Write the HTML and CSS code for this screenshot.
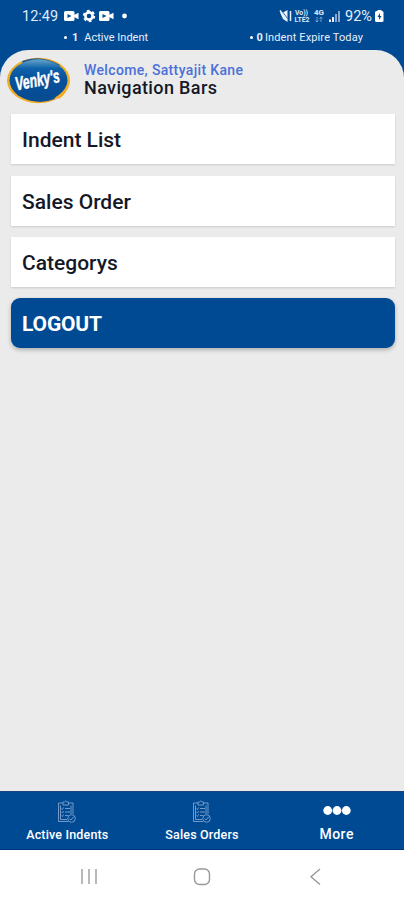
FILE: index.html
```html
<!DOCTYPE html>
<html lang="en">
<head>
<meta charset="utf-8">
<title>Navigation Bars</title>
<link rel="stylesheet" href="styles.css">
</head>
<body>
<div class="phone">
  <header class="top">
    <div class="status">
      <span class="clock">12:49</span>
      <svg class="status-left" width="66" height="14" viewBox="0 0 66 14">
        <g fill="#fff"><rect x="0" y="2" width="10.500" height="10" rx="1.500"/><path d="M10 6l4.500-2.200v6.400L10 8z"/>
        <rect x="35" y="2" width="10.500" height="10" rx="1.500"/><path d="M45 6l4.500-2.200v6.400L45 8z"/>
        <circle cx="60.500" cy="7" r="2.400"/></g>
        <path d="M3.500 5L7.500 7l-4 2zM38.500 5L42.500 7l-4 2z" fill="#004a94"/>
        <circle cx="25" cy="7" r="3.600" fill="none" stroke="#fff" stroke-width="2.600"/>
        <circle cx="25" cy="7" r="5.200" fill="none" stroke="#fff" stroke-width="2" stroke-dasharray="2.700 2.745"/>
      </svg>
      <svg class="status-right" width="61" height="16" viewBox="0 0 61 16">
        <path d="M0 4.500h3l4.500-2.500v12L3 11z" fill="#e7effa"/>
        <path d="M1.500 2.500l6 8" stroke="#004a94" stroke-width=".8"/><path d="M0 2.500l7 10M10.500 3v10" stroke="#e7effa" stroke-width="1.500"/>
        <g class="tiny"><text x="15" y="7" textLength="13" lengthAdjust="spacingAndGlyphs">Vo))</text><text x="14.500" y="14" textLength="15" lengthAdjust="spacingAndGlyphs">LTE2</text><text x="34" y="7" textLength="10" lengthAdjust="spacingAndGlyphs">4G</text></g>
        <path d="M37 9v5m-1.500-1.500L37 14l1.500-1.500M41 14V9m-1.500 1.500L41 9l1.500 1.500" fill="none" stroke="#8fb0d8" stroke-width=".8"/>
        <path d="M49 11.500h2V14h-2zM52 9h2v5h-2z" fill="#e7effa"/><path d="M55 6h2v8h-2zM58 3h2v11h-2z" fill="#87a9d2"/>
      </svg>
      <span class="percent">92%</span>
      <svg class="battery" width="9" height="13" viewBox="0 0 9 13"><rect x="2.500" width="4" height="2" fill="#fff"/><rect y="1" width="8.500" height="11" rx="1.500" fill="#fff"/><path d="M5 3L2.500 7H4v3l2.500-4H5z" fill="#004a94"/></svg>
    </div>
    <div class="counts">
      <span class="active-count"><i class="dot"></i><b>1</b><span>Active Indent</span></span>
      <span class="expire-count"><i class="dot"></i><b>0</b><span>Indent Expire Today</span></span>
    </div>
  </header>

  <main class="panel">
    <div class="profile">
      <svg class="logo" width="64" height="48" viewBox="0 0 64 48">
        <defs><linearGradient id="sky" x1="0" y1="0" x2="0" y2="1"><stop offset="0" stop-color="#68a5c8"/><stop offset=".22" stop-color="#0d61aa"/><stop offset=".5" stop-color="#07509b"/><stop offset="1" stop-color="#064b91"/></linearGradient></defs>
        <ellipse cx="31.500" cy="24.500" rx="31.500" ry="22.800" fill="#f1ac25"/>
        <path d="M15 5Q34-2 53 9l-3 3Q32 1 16 8zM9 37q18 14 39 6l-3-4q-16 6-32-1z" fill="#24568a"/>
        <ellipse cx="31.500" cy="24.300" rx="29" ry="21" fill="url(#sky)"/>
        <path d="M49 41q9-6 12-14-1 11-9 16z" fill="#f1ac25"/>
        <text class="wordmark" x="9.500" y="34.500" textLength="45" lengthAdjust="spacingAndGlyphs" transform="rotate(-11 9.500 34.500)">Venky's</text>
      </svg>
      <div class="heading"><p class="welcome">Welcome, Sattyajit Kane</p><h1>Navigation Bars</h1></div>
    </div>
    <nav class="menu">
      <a class="card indent">Indent List</a>
      <a class="card sales">Sales Order</a>
      <a class="card category">Categorys</a>
      <a class="card logout">LOGOUT</a>
    </nav>
  </main>

  <nav class="tabs">
    <a class="tab">
      <svg width="20" height="24" viewBox="0 0 20 24"><g fill="none" stroke="#7199c9" stroke-width="1"><path d="M6 3H1.500v18.500H11M11.500 3H16v11M6 4V2h1.500Q8.800-.5 10 2h1.500v3H6zM3.500 5.500v14H10M14 5.500V14"/><path d="M4.500 8.500l1 1 1-2M8 8.500h5M4.500 12l1 1 1-2M8 12h5M4.500 15.500l1 1 1-2M8 15.500h3"/><circle cx="14.500" cy="18.500" r="3.800"/><path d="M12.500 18.500l1.500 1.500 3-3.500"/></g></svg>
      <span class="label-active">Active Indents</span>
    </a>
    <a class="tab">
      <svg width="20" height="24" viewBox="0 0 20 24"><g fill="none" stroke="#7199c9" stroke-width="1"><path d="M6 3H1.500v18.500H11M11.500 3H16v11M6 4V2h1.500Q8.800-.5 10 2h1.500v3H6zM3.500 5.500v14H10M14 5.500V14"/><path d="M4.500 8.500l1 1 1-2M8 8.500h5M4.500 12l1 1 1-2M8 12h5M4.500 15.500l1 1 1-2M8 15.500h3"/><circle cx="14.500" cy="18.500" r="3.800"/><path d="M12.500 18.500l1.500 1.500 3-3.500"/></g></svg>
      <span class="label-sales">Sales Orders</span>
    </a>
    <a class="tab more">
      <svg width="28" height="24" viewBox="0 0 28 24"><g fill="#fff"><circle cx="4.700" cy="10.500" r="4.400"/><circle cx="14" cy="10.500" r="4.400"/><circle cx="23.300" cy="10.500" r="4.400"/></g></svg>
      <span class="label-more">More</span>
    </a>
  </nav>

  <footer class="system">
    <svg width="18" height="18" viewBox="0 0 18 18"><path d="M2 1v15M9 1v15M16 1v15" stroke="#a2a2a2" stroke-width="1.500"/></svg>
    <svg width="18" height="18" viewBox="0 0 18 18"><rect x="1.500" y="1" width="15" height="15.500" rx="5" fill="none" stroke="#999" stroke-width="1.400"/></svg>
    <svg width="12" height="18" viewBox="0 0 12 18"><path d="M11 1L2 8.700l9 7.800" fill="none" stroke="#999" stroke-width="1.400"/></svg>
  </footer>
</div>
</body>
</html>
```
FILE: styles.css
```css
* { box-sizing: border-box; }
body { margin: 0; font-family: Roboto, sans-serif; }
h1, p { margin: 0; }
svg { display: block; flex: none; overflow: visible; }

.phone { width: 404px; height: 900px; display: flex; flex-direction: column; background: #004a94; overflow: hidden; }
.top { height: 50px; flex: none; color: #fff; }
.status { display: flex; align-items: center; height: 31px; padding: 1px 20px 0 22px; white-space: nowrap; }
.clock { width: 42px; font-size: 14.5px; color: #dfebfa; }
.status-right { margin-left: 150px; }
.percent { width: 34px; padding-left: 4px; font-size: 14.5px; color: #e7effa; }
.tiny { font-size: 7px; font-weight: 700; fill: #dce9f8; }
.counts { display: flex; justify-content: space-between; height: 13px; padding: 0 41px 0 64px; font-size: 11px; line-height: 13px; color: #e7effa; white-space: nowrap; }
.counts > span { display: flex; align-items: center; }
.dot { width: 3px; height: 3px; border-radius: 50%; background: #fff; }
.active-count b { margin: 0 6px 0 5px; }
.expire-count b { margin: 0 2px 0 3px; }
.expire-count { letter-spacing: .13px; }

.panel { flex: 1; background: #ebebeb; border-radius: 28px 28px 0 0; }
.profile { display: flex; height: 64px; padding: 6px 0 0 7px; }
.heading { padding: 5px 0 0 13px; }
.welcome { padding-top: 1px; font-size: 14px; line-height: 17px; font-weight: 500; color: #4b70d8; letter-spacing: .35px; white-space: nowrap; }
h1 { font-size: 18px; line-height: 18px; font-weight: 500; color: #141827; letter-spacing: .37px; white-space: nowrap; }
.menu { display: grid; grid-template-rows: repeat(4, 50px); row-gap: 11.5px; padding: 0 9px 0 11px; }
.card { display: flex; align-items: center; padding: 2px 11px 0; background: #fff; box-shadow: 0 1px 2px #0002; color: #141827; font-size: 21px; font-weight: 500; }
.card.logout { margin: -1px 0 1px; color: #fff; background: #004a94; border-radius: 9px; font-weight: 700; letter-spacing: -.15px; box-shadow: 0 2px 4px #0004; }

.tabs { display: grid; grid-template-columns: repeat(3, 1fr); height: 59px; flex: none; background: #004a94; border-top: 1px solid #174184; border-bottom: 1px solid #00337f; }
.tab { display: flex; flex-direction: column; align-items: center; padding-top: 8px; color: #fff; font-size: 12.5px; line-height: 21px; font-weight: 500; letter-spacing: .17px; white-space: nowrap; }
.label-more { font-size: 14px; line-height: 20px; letter-spacing: .5px; }
.system { display: grid; grid-template-columns: 178px 48px 178px; place-items: center; height: 50px; flex: none; padding-top: 3px; background: #fff; }
.wordmark { font-family: "Liberation Sans", sans-serif; font-size: 19px; font-weight: 700; font-style: italic; fill: #fff; stroke: #fff; stroke-width: .5px; }
```
